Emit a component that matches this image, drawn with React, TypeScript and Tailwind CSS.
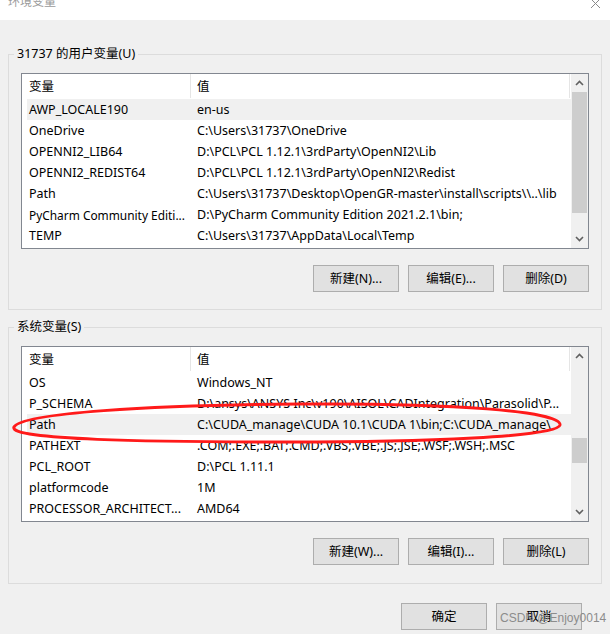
import React from "react";

type Row = { name: string; value: string; selected?: boolean; nameClass?: string };

const userVars: Row[] = [
  { name: "AWP_LOCALE190", value: "en-us", selected: true },
  { name: "OneDrive", value: "C:\\Users\\31737\\OneDrive" },
  { name: "OPENNI2_LIB64", value: "D:\\PCL\\PCL 1.12.1\\3rdParty\\OpenNI2\\Lib" },
  { name: "OPENNI2_REDIST64", value: "D:\\PCL\\PCL 1.12.1\\3rdParty\\OpenNI2\\Redist" },
  { name: "Path", value: "C:\\Users\\31737\\Desktop\\OpenGR-master\\install\\scripts\\\\..\\lib" },
  { name: "PyCharm Community Editi...", value: "D:\\PyCharm Community Edition 2021.2.1\\bin;", nameClass: "text-[11.9px]" },
  { name: "TEMP", value: "C:\\Users\\31737\\AppData\\Local\\Temp" },
];

const systemVars: Row[] = [
  { name: "OS", value: "Windows_NT" },
  { name: "P_SCHEMA", value: "D:\\ansys\\ANSYS Inc\\v190\\AISOL\\CADIntegration\\Parasolid\\P..." },
  { name: "Path", value: "C:\\CUDA_manage\\CUDA 10.1\\CUDA 1\\bin;C:\\CUDA_manage\\", selected: true },
  { name: "PATHEXT", value: ".COM;.EXE;.BAT;.CMD;.VBS;.VBE;.JS;.JSE;.WSF;.WSH;.MSC" },
  { name: "PCL_ROOT", value: "D:\\PCL 1.11.1" },
  { name: "platformcode", value: "1M" },
  { name: "PROCESSOR_ARCHITECT...", value: "AMD64" },
];

const Chevron = ({ down }: { down?: boolean }) => (
  <svg width="9" height="6" viewBox="0 0 9 6" className={down ? "rotate-180" : ""}>
    <path d="M1 5 L4.5 1.5 L8 5" fill="none" stroke="#606060" strokeWidth="1.6" />
  </svg>
);

const ScrollBar = ({ thumbTop, thumbHeight }: { thumbTop: number; thumbHeight: number }) => (
  <div className="w-[17px] shrink-0 bg-[#f0f0f0] flex flex-col">
    <div className="h-[18px] flex items-center justify-center">
      <Chevron />
    </div>
    <div className="flex-1 relative">
      <div className="absolute left-[1px] right-[1px] bg-[#cdcdcd]" style={{ top: thumbTop, height: thumbHeight }} />
    </div>
    <div className="h-[18px] flex items-center justify-center">
      <Chevron down />
    </div>
  </div>
);

const VarList = ({ rows, thumbTop, thumbHeight }: { rows: Row[]; thumbTop: number; thumbHeight: number }) => (
  <div className="h-[176px] border border-[#828790] bg-white flex min-w-0">
    <div className="flex-1 min-w-0 flex flex-col overflow-hidden">
      {/* Header */}
      <div className="h-[25px] flex items-center shrink-0">
        <div className="w-[168px] pl-[7px] shrink-0">变量</div>
        <div className="w-px h-[24px] self-start bg-[#e5e5e5]" />
        <div className="flex-1 pl-[6px]">值</div>
        <div className="w-px h-[24px] self-start bg-[#e5e5e5]" />
        <div className="w-px" />
      </div>
      {rows.map((r) => (
        <div key={r.name} className="pl-[5px] min-w-0">
          <div className={`h-[21px] flex items-center whitespace-nowrap min-w-0 ${r.selected ? "bg-[#f0f0f0]" : ""}`}>
            <div className={`w-[163px] shrink-0 pl-[2px] overflow-hidden ${r.nameClass ?? ""}`}>{r.name}</div>
            <div className="flex-1 min-w-0 pl-[7px] overflow-hidden">{r.value}</div>
          </div>
        </div>
      ))}
    </div>
    <ScrollBar thumbTop={thumbTop} thumbHeight={thumbHeight} />
  </div>
);

const Btn = ({ label }: { label: string }) => (
  <div className="w-[86px] h-[27px] border border-[#adadad] bg-[#e1e1e1] flex items-center justify-center text-black">{label}</div>
);

const Group = ({ title, rows, thumbTop, thumbHeight, buttons, pb }: { title: string; rows: Row[]; thumbTop: number; thumbHeight: number; buttons: string[]; pb: string }) => (
  <fieldset className={`mx-[8px] min-w-0 border border-[#dcdcdc] pl-[12px] pr-[12px] pt-[11px] ${pb}`}>
    <legend className="-ml-[7px] px-[3px] leading-[16px] text-[12.5px] text-black">{title}</legend>
    <VarList rows={rows} thumbTop={thumbTop} thumbHeight={thumbHeight} />
    <div className="flex justify-end gap-[9px] mt-[16px]">
      {buttons.map((b) => (
        <Btn key={b} label={b} />
      ))}
    </div>
  </fieldset>
);

export default function App() {
  return (
    <div
      className="relative w-[610px] h-[634px] bg-[#f0f0f0] overflow-hidden flex flex-col text-[12.5px] leading-[16px] text-black"
      style={{ fontFamily: '"Noto Sans", "Noto Sans CJK SC", sans-serif' }}
    >
      {/* Title bar */}
      <div className="h-[20px] bg-white flex items-start justify-between shrink-0 overflow-hidden">
        <div className="pl-[8px] -mt-[6px] text-[12px] text-[#9a9a9a]">环境变量</div>
        <svg width="12" height="10" viewBox="0 0 12 10" className="mr-[8px]">
          <path d="M1 -1 L10 8 M10 -1 L1 8" stroke="#8a8a8a" strokeWidth="1" />
        </svg>
      </div>

      <div className="mt-[26px]">
        <Group title="31737 的用户变量(U)" rows={userVars} thumbTop={0} thumbHeight={121} buttons={["新建(N)...", "编辑(E)...", "删除(D)"]} pb="pb-[17px]" />
      </div>
      <div className="mt-[9px]">
        <Group title="系统变量(S)" rows={systemVars} thumbTop={73} thumbHeight={25} buttons={["新建(W)...", "编辑(I)...", "删除(L)"]} pb="pb-[18px]" />
      </div>

      {/* Dialog buttons */}
      <div className="flex justify-end gap-[9px] mt-[19px] pr-[28px]">
        <Btn label="确定" />
        <Btn label="取消" />
      </div>

      {/* Watermark */}
      <div className="absolute left-[500px] top-[610px] text-[12px] text-[#8c8c8c] whitespace-nowrap" style={{ fontFamily: '"Liberation Sans", sans-serif' }}>
        CSDN @Enjoy0014
      </div>

      {/* Red annotation ellipse */}
      <svg className="absolute left-0 top-0 pointer-events-none" width="610" height="634">
        <path
          d="M14 427 C 22 413, 150 405, 300 404 C 450 403, 562 411, 560 425 C 558 437, 420 442, 290 442 C 150 442, 8 440, 14 427"
          fill="none"
          stroke="#ff1a1a"
          strokeWidth="3"
        />
      </svg>
    </div>
  );
}
